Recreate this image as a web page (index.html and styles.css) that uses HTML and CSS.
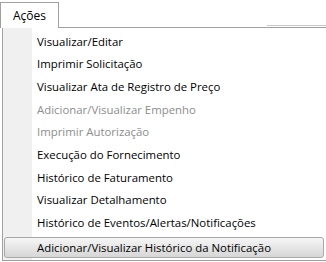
FILE: index.html
```html
<!DOCTYPE html>
<html lang="pt-BR">
<head>
    <meta charset="UTF-8">
    <title>Ações</title>
    <link rel="stylesheet" href="styles.css">
</head>
<body>
    <div class="tab-bar">
        <div class="tab">Ações</div>
        <div class="tab-rest">
            <div class="tab-rest-mark"></div>
        </div>
    </div>
    <div class="menu">
        <div class="menu-item">Visualizar/Editar</div>
        <div class="menu-item">Imprimir Solicitação</div>
        <div class="menu-item">Visualizar Ata de Registro de Preço</div>
        <div class="menu-item disabled">Adicionar/Visualizar Empenho</div>
        <div class="menu-item disabled">Imprimir Autorização</div>
        <div class="menu-item">Execução do Fornecimento</div>
        <div class="menu-item">Histórico de Faturamento</div>
        <div class="menu-item">Visualizar Detalhamento</div>
        <div class="menu-item">Histórico de Eventos/Alertas/Notificações</div>
        <div class="menu-item active">Adicionar/Visualizar Histórico da Notificação</div>
    </div>
</body>
</html>
```

FILE: styles.css
```css
body {
    margin: 0;
    padding: 0;
    background: #ffffff;
    font-family: "Open Sans", "Noto Sans", sans-serif;
    font-size: 11.4px;
    color: #000000;
}
.tab-bar {
    display: flex;
    padding-top: 2px;
    box-sizing: border-box;
    height: 28px;
}
.tab {
    width: 59px;
    box-sizing: border-box;
    border: 1px solid #a0a0a0;
    border-bottom: none;
    display: flex;
    align-items: center;
    justify-content: center;
    font-size: 12px;
    background: #ffffff;
}
.tab-rest {
    flex: 1;
    border-bottom: 1px solid #a0a0a0;
    display: flex;
    justify-content: flex-end;
    align-items: flex-end;
    padding-bottom: 1px;
}
.tab-rest-mark {
    width: 59px;
    border-bottom: 1px solid #c8c8c8;
}
.menu {
    margin-left: 2px;
    height: 233px;
    box-sizing: border-box;
    border-left: 1px solid #a0a0a0;
    border-bottom: 1px solid #a0a0a0;
    padding: 2.6px 0 0;
    background: linear-gradient(to right, #f0f0f0 0, #f0f0f0 29px, #ffffff 29px);
}
.menu-item {
    height: 22.7px;
    line-height: 22.7px;
    padding-left: 34px;
    white-space: nowrap;
}
.menu-item.disabled {
    color: #8d8d8d;
}
.menu-item.active {
    margin: 2px 2px 0 1px;
    padding-left: 32px;
    height: 19px;
    line-height: 19px;
    border: 1px solid #a8a8a8;
    border-radius: 3px;
    background: linear-gradient(to bottom, #f6f6f6, #d6d6d6);
}
```
